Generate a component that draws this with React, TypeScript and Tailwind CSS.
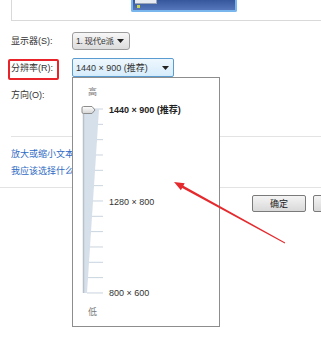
const TICKS = Array.from({ length: 13 }, (_, i) => 6 + i * 15.33);

function Caret() {
  return (
    <svg width="7" height="4" viewBox="0 0 7 4" className="shrink-0">
      <path d="M0 0H7L3.5 4Z" fill="#222" />
    </svg>
  );
}

function SliderTrack() {
  // svg origin is at page (81, 103)
  return (
    <svg width="28" height="197" viewBox="0 0 28 197" className="shrink-0">
      {TICKS.map((y, i) => (
        <line key={i} x1="6" y1={y} x2="22" y2={y} stroke="#c9d4de" strokeWidth="1" />
      ))}
      <polygon points="2,6 18,6 6,190 2,190" fill="#d6e0ea" />
      <line x1="2.5" y1="6" x2="2.5" y2="190" stroke="#b9c1c9" strokeWidth="1.5" />
      <defs>
        <linearGradient id="thumb" x1="0" y1="0" x2="0" y2="1">
          <stop offset="0" stopColor="#ffffff" />
          <stop offset="1" stopColor="#d4d4d4" />
        </linearGradient>
      </defs>
      <path
        d="M2.5 3.5H11L14 7L11 10.5H2.5Q1 10.5 1 9V5Q1 3.5 2.5 3.5Z"
        fill="url(#thumb)"
        stroke="#8c8c8c"
        strokeWidth="1"
      />
    </svg>
  );
}

export default function App() {
  return (
    <div className="relative w-[321px] h-[339px] overflow-hidden bg-white text-[9px] leading-[14px] text-[#333] font-['Liberation_Sans','Noto_Sans_CJK_SC',sans-serif]">
      {/* preview strip */}
      <div className="ml-[11px] h-[21px] border-l border-b border-[#d9d9d9]">
        <div className="ml-[119px] w-[106px] h-[12px] rounded-b-[2px] border-2 border-t-0 border-[#79b6ee] bg-gradient-to-b from-[#37579c] to-[#5676bb]">
          <div className="ml-[2px] w-[22px] h-[4px] bg-[#e8ecf2] border-b border-r border-[#9aa6b8]" />
          <div className="ml-[4px] mt-[1px] w-[3px] h-[3px] bg-[#c8d84a]" />
        </div>
      </div>

      {/* display */}
      <div className="mt-[11px] ml-[11px] flex items-center h-[18px]">
        <span className="w-[61px]">显示器(S):</span>
        <div className="w-[58px] h-[18px] flex items-center justify-between pl-[3px] pr-[5px] rounded-[3px] border border-[#9c9c9c] bg-gradient-to-b from-[#f7f7f7] to-[#dcdcdc]">
          <span className="text-[8.5px] tracking-[-0.3px]">1. 现代e派</span>
          <Caret />
        </div>
      </div>

      {/* resolution */}
      <div className="mt-[8px] ml-[11px] flex items-center h-[19px]">
        <span className="w-[61px]">分辨率(R):</span>
        <div className="w-[102px] h-[19px] flex items-center justify-between pl-[3px] pr-[4px] rounded-[2px] border border-[#5a9bd0] bg-gradient-to-b from-[#eef7fd] to-[#d6ecfb]">
          <span>1440 × 900 (推荐)</span>
          <Caret />
        </div>
      </div>

      {/* orientation */}
      <div className="mt-[9px] ml-[11px] flex items-center h-[18px]">
        <span>方向(O):</span>
      </div>

      <div className="mt-[32px] ml-[11px] h-px bg-[#e3e3e3]" />

      <div className="mt-[8px] ml-[11px] h-[17px] flex items-center text-[#2f6bc4] whitespace-nowrap">
        放大或缩小文本和其他项目
      </div>
      <div className="ml-[11px] h-[17px] flex items-center text-[#2f6bc4] whitespace-nowrap">
        我应该选择什么显示器设置？
      </div>

      <div className="mt-[8px] h-px bg-[#e3e3e3]" />

      <div className="mt-[7px] pl-[252px] flex gap-[7px]">
        <div className="w-[54px] h-[17px] shrink-0 flex items-center justify-center rounded-[2px] border border-[#7a7a7a] bg-gradient-to-b from-[#f4f4f4] to-[#d9d9d9] text-[#222]">
          确定
        </div>
        <div className="w-[54px] h-[17px] shrink-0 rounded-[2px] border border-[#7a7a7a] bg-gradient-to-b from-[#f4f4f4] to-[#d9d9d9]" />
      </div>

      {/* red annotation box */}
      <div className="absolute left-[8px] top-[59px] w-[51px] h-[21px] rounded-[2px] border-2 border-[#e8232a]" />

      {/* resolution dropdown list */}
      <div className="absolute left-[72px] top-[77px] w-[148px] h-[250px] border border-[#8d8d8d] bg-white pl-[8px] pt-[7px]">
        <div className="ml-[7px] text-[#7a7a7a]">高</div>
        <div className="mt-[4px] flex h-[197px]">
          <SliderTrack />
          <div className="flex flex-col justify-between">
            <span className="font-bold text-[#222]">1440 × 900 (推荐)</span>
            <span>1280 × 800</span>
            <span>800 × 600</span>
          </div>
        </div>
        <div className="ml-[7px] mt-[5px] text-[#7a7a7a]">低</div>
      </div>

      {/* red arrow */}
      <svg className="absolute left-0 top-0" width="321" height="339" viewBox="0 0 321 339">
        <polygon points="174,182 184.7,183.3 183.4,185.7 285.2,242.6 284.8,243.4 182.2,187.9 180.9,190.3" fill="#e52a2e" />
      </svg>
    </div>
  );
}
